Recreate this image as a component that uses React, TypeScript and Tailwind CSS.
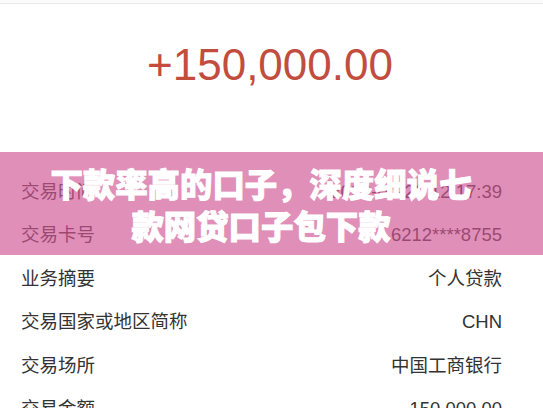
import React from "react";

const rows: [string, string][] = [
  ["交易时间", "2022-04-22 12:17:39"],
  ["交易卡号", "6212****8755"],
  ["业务摘要", "个人贷款"],
  ["交易国家或地区简称", "CHN"],
  ["交易场所", "中国工商银行"],
  ["交易金额", "150,000.00"],
];

export default function App() {
  return (
    <div
      className="relative w-[543px] h-[408px] overflow-hidden bg-white"
      style={{ fontFamily: '"Liberation Sans", "Noto Sans CJK SC", sans-serif' }}
    >
      <div className="h-[4px] bg-[#fbfbfb] border-b border-[#e9e9e9]" />
      <div className="h-[166px] pt-[39px] flex justify-center">
        <div className="text-[44px] leading-[44px] text-[#c24d3f] pr-[3px]">+150,000.00</div>
      </div>
      <div className="flex flex-col">
        {rows.map(([k, v]) => (
          <div
            key={k}
            className="h-[43.5px] flex items-center justify-between pl-[21px] pr-[41px] text-[18.5px] text-[#333333]"
          >
            <span>{k}</span>
            <span>{v}</span>
          </div>
        ))}
      </div>
      <div className="absolute left-0 right-0 top-[152px] h-[103px] bg-[#d05593]/[0.66] pt-[10px] pr-[21px]">
        <div
          className="text-center text-white font-black text-[32.4px] leading-[42px]"
          style={
            {
              fontFamily: '"Noto Sans CJK SC", sans-serif',
              WebkitTextStroke: "1px #ffffff",
            } as React.CSSProperties
          }
        >
          下款率高的口子<span className="inline-block w-[1em] text-left">，</span>深度细说七
          <br />
          款网贷口子包下款
        </div>
      </div>
    </div>
  );
}
